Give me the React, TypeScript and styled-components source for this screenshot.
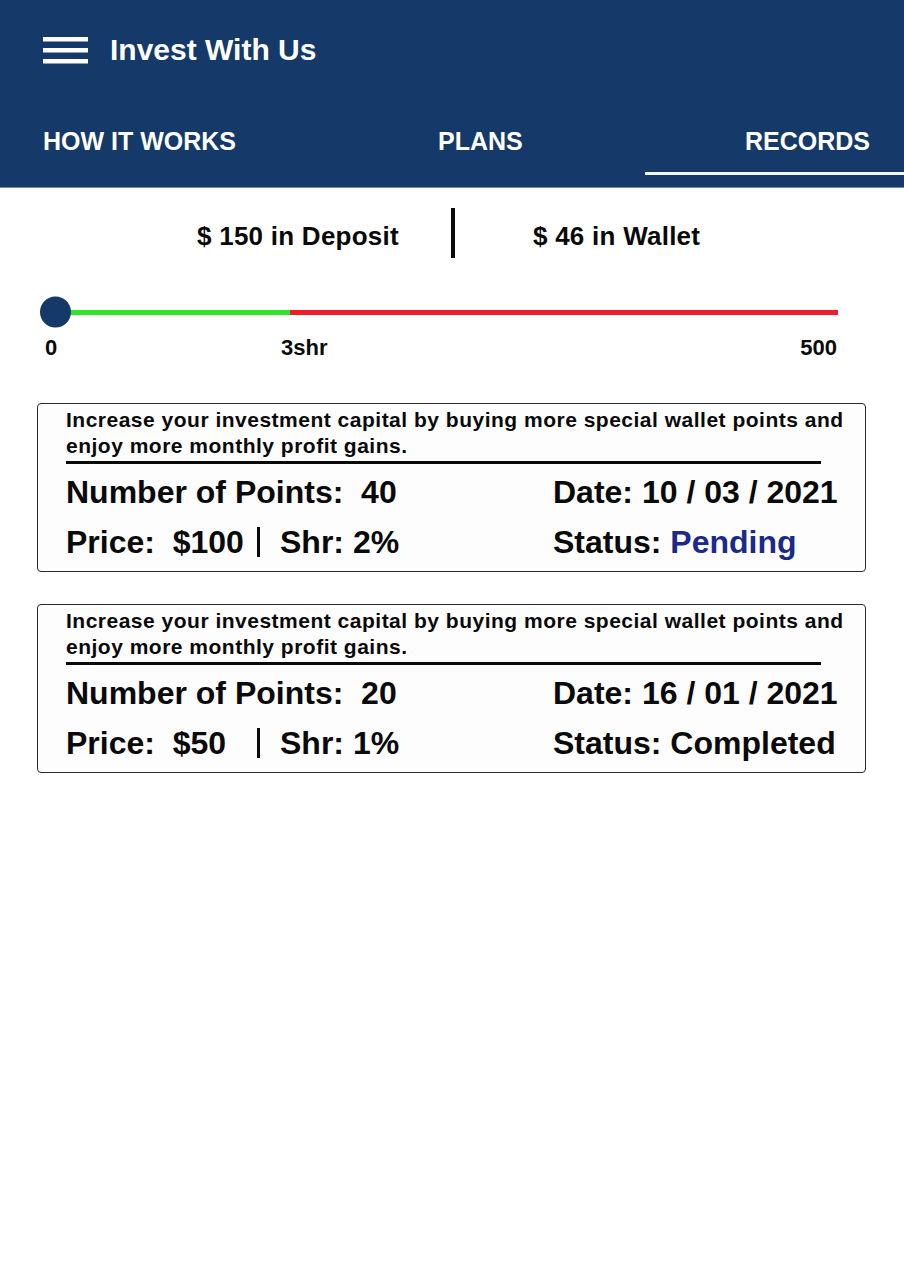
import React from "react";
import styled, { createGlobalStyle } from "styled-components";

const GlobalStyle = createGlobalStyle`
  html, body {
    margin: 0;
    padding: 0;
    background: #ffffff;
  }
  body {
    font-family: "Liberation Sans", Arial, Helvetica, sans-serif;
    color: #0a0a0a;
  }
  * { box-sizing: border-box; }
`;

const NAVY = "#153969";

const Page = styled.div`
  width: 904px;
  min-height: 1280px;
  background: #ffffff;
`;

const Header = styled.header`
  background: ${NAVY};
  border-bottom: 1px solid #6f8db5;
`;

const TopBar = styled.div`
  height: 100px;
  display: flex;
  align-items: center;
  padding-left: 43px;
`;

const MenuIcon = styled.svg`
  width: 45px;
  height: 27px;
  display: block;
  flex-shrink: 0;
`;

const Title = styled.h1`
  margin: 0 0 0 22px;
  font-size: 30px;
  font-weight: 700;
  color: #ffffff;
  line-height: 34px;
`;

const TabBar = styled.nav`
  height: 87px;
  display: flex;
  align-items: flex-start;
`;

const Tab = styled.div<{ $width: string; $indent: number; $active?: boolean }>`
  width: ${(p) => p.$width};
  flex: ${(p) => (p.$width === "auto" ? "1" : "none")};
  height: 75px;
  padding-left: ${(p) => p.$indent}px;
  padding-top: 26px;
  border-bottom: 3px solid ${(p) => (p.$active ? "#f2f5fa" : "transparent")};
  font-size: 25px;
  font-weight: 700;
  line-height: 30px;
  color: #ffffff;
  white-space: nowrap;
`;

const BalanceRow = styled.div`
  display: flex;
  align-items: center;
  padding: 20px 0 0 197px;
  height: 70px;
`;

const BalanceText = styled.span`
  font-size: 26px;
  font-weight: 700;
  letter-spacing: 0.25px;
  line-height: 30px;
  margin-top: 5px;
  white-space: nowrap;
`;

const BalanceDivider = styled.span`
  width: 4px;
  height: 50px;
  background: #0a0a0a;
  margin: 0 78px 0 52px;
`;

const SliderRow = styled.div`
  height: 30px;
  margin: 39px 66px 0 55px;
  display: flex;
  align-items: center;
`;

const Track = styled.div<{ $fill: number }>`
  position: relative;
  flex: 1;
  height: 5px;
  background: linear-gradient(
    to right,
    #30e32b 0%,
    #30e32b ${(p) => p.$fill}%,
    #ee1d2c ${(p) => p.$fill}%,
    #ee1d2c 100%
  );
`;

const Thumb = styled.span`
  position: absolute;
  left: -15px;
  top: 50%;
  width: 31px;
  height: 31px;
  border-radius: 50%;
  background: ${NAVY};
  transform: translateY(-50%);
`;

const ScaleLabels = styled.div`
  display: grid;
  grid-template-columns: 236px 1fr auto;
  padding: 0 67px 0 45px;
  margin-top: 8px;
`;

const ScaleLabel = styled.span`
  font-size: 22px;
  font-weight: 700;
  line-height: 26px;
`;

const CardList = styled.section`
  display: flex;
  flex-direction: column;
  gap: 32px;
  margin: 42px 38px 0 37px;
`;

const Card = styled.article`
  border: 1px solid #2a2a2a;
  border-radius: 4px;
  background: #fdfdfd;
  padding: 3px 12px 11px 28px;
`;

const Description = styled.p`
  margin: 0;
  font-size: 21px;
  font-weight: 700;
  letter-spacing: 0.5px;
  line-height: 26px;
  color: #0a0a0a;
`;

const Separator = styled.div`
  height: 3px;
  background: #0a0a0a;
  margin: 2px 32px 0 0;
`;

const InfoRow = styled.div<{ $first?: boolean }>`
  display: grid;
  grid-template-columns: 487px 1fr;
  align-items: center;
  margin-top: ${(p) => (p.$first ? "10px" : "14px")};
  height: 36px;
`;

const InfoText = styled.span<{ $width?: number }>`
  font-size: 32px;
  font-weight: 700;
  line-height: 36px;
  white-space: pre;
  color: #0a0a0a;
  ${(p) => (p.$width ? `width: ${p.$width}px; flex-shrink: 0;` : "")}
`;

const PriceCell = styled.div`
  display: flex;
  align-items: center;
`;

const PriceBar = styled.span`
  width: 3px;
  height: 30px;
  background: #0a0a0a;
  margin-right: 20px;
  flex-shrink: 0;
`;

const StatusValue = styled.span<{ $pending: boolean }>`
  color: ${(p) => (p.$pending ? "#1b2a8a" : "#0a0a0a")};
`;

type RecordItem = {
  points: number;
  date: string;
  price: string;
  shr: string;
  status: "Pending" | "Completed";
};

const records: RecordItem[] = [
  { points: 40, date: "10 / 03 / 2021", price: "$100", shr: "2%", status: "Pending" },
  { points: 20, date: "16 / 01 / 2021", price: "$50", shr: "1%", status: "Completed" },
];

const RecordCard: React.FC<{ item: RecordItem }> = ({ item }) => (
  <Card>
    <Description>
      Increase your investment capital by buying more special wallet points and enjoy more monthly
      profit gains.
    </Description>
    <Separator />
    <InfoRow $first>
      <InfoText>{`Number of Points:  ${item.points}`}</InfoText>
      <InfoText>{`Date: ${item.date}`}</InfoText>
    </InfoRow>
    <InfoRow>
      <PriceCell>
        <InfoText $width={191}>{`Price:  ${item.price}`}</InfoText>
        <PriceBar />
        <InfoText>{`Shr: ${item.shr}`}</InfoText>
      </PriceCell>
      <InfoText>
        {"Status: "}
        <StatusValue $pending={item.status === "Pending"}>{item.status}</StatusValue>
      </InfoText>
    </InfoRow>
  </Card>
);

export default function App() {
  return (
    <Page>
      <GlobalStyle />
      <Header>
        <TopBar>
          <MenuIcon viewBox="0 0 45 27" aria-hidden="true">
            <rect x="0" y="0" width="45" height="4.5" fill="#ffffff" />
            <rect x="0" y="11" width="45" height="4.5" fill="#ffffff" />
            <rect x="0" y="22" width="45" height="4.5" fill="#ffffff" />
          </MenuIcon>
          <Title>Invest With Us</Title>
        </TopBar>
        <TabBar>
          <Tab $width="340px" $indent={43}>HOW IT WORKS</Tab>
          <Tab $width="305px" $indent={98}>PLANS</Tab>
          <Tab $width="auto" $indent={100} $active>
            RECORDS
          </Tab>
        </TabBar>
      </Header>

      <BalanceRow>
        <BalanceText>$ 150 in Deposit</BalanceText>
        <BalanceDivider />
        <BalanceText>$ 46 in Wallet</BalanceText>
      </BalanceRow>

      <SliderRow>
        <Track $fill={30}>
          <Thumb />
        </Track>
      </SliderRow>
      <ScaleLabels>
        <ScaleLabel>0</ScaleLabel>
        <ScaleLabel>3shr</ScaleLabel>
        <ScaleLabel>500</ScaleLabel>
      </ScaleLabels>

      <CardList>
        {records.map((r) => (
          <RecordCard key={r.date} item={r} />
        ))}
      </CardList>
    </Page>
  );
}
